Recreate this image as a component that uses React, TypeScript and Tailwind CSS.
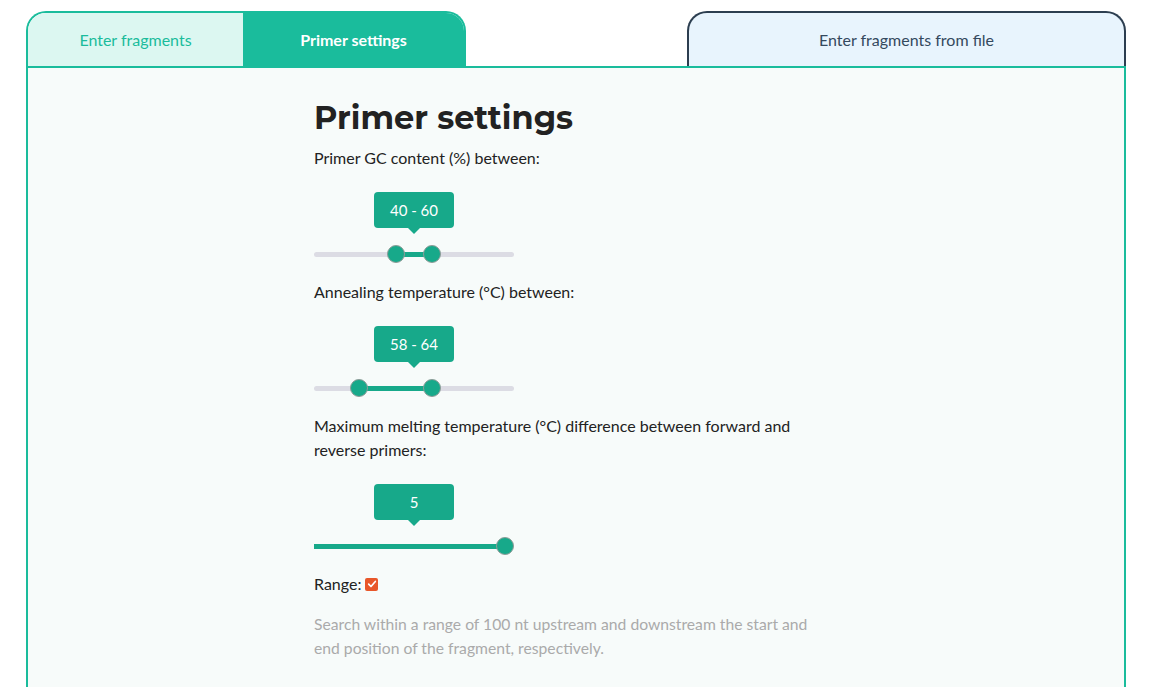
import React from "react";

interface SliderProps {
  min: number;
  max: number;
  values: number[];
  label: string;
}

const THUMB = 18;
const TRACK = 200;

function RangeSlider({ min, max, values, label }: SliderProps) {
  const pos = (v: number) => ((v - min) / (max - min)) * (TRACK - THUMB) + THUMB / 2;
  const lo = values.length > 1 ? pos(values[0]) : 0;
  const hi = pos(values[values.length - 1]);

  return (
    <div className="w-[200px] pt-[22px] pb-[17px]">
      <div className="flex flex-col items-center">
        <div className="flex h-9 w-20 items-center justify-center rounded bg-[#17a98a] text-[15px] text-white">
          {label}
        </div>
        <div className="h-0 w-0 border-x-[6px] border-t-[6px] border-x-transparent border-t-[#17a98a]" />
      </div>
      <div className="relative mt-[11px] h-[18px]">
        <div className="absolute top-[7px] left-0 h-[5px] w-full rounded-full bg-[#dcdce4]" />
        <div
          className="absolute top-[7px] h-[5px] bg-[#17a98a]"
          style={{ left: lo, width: hi - lo }}
        />
        {values.map((v, i) => (
          <div
            key={i}
            className="absolute top-0 h-[18px] w-[18px] rounded-full border border-[#8f9c98] bg-[#17a98a]"
            style={{ left: pos(v) - THUMB / 2 }}
          />
        ))}
      </div>
    </div>
  );
}

export default function App() {
  return (
    <div
      className="min-h-screen bg-white pt-[11px] text-base text-[#222]"
      style={{ fontFamily: "Lato, 'Noto Sans', sans-serif" }}
    >
      <div className="ml-[26px] flex w-[1100px] justify-between">
        <div className="flex h-[55px] w-[440px] overflow-hidden rounded-t-[20px] border-2 border-b-0 border-[#1abc9c]">
          <div className="flex w-[215px] items-center justify-center bg-[#dcf7f1] pt-px text-[#1abc9c]">
            Enter fragments
          </div>
          <div className="flex flex-1 items-center justify-center bg-[#1abc9c] pt-px font-bold text-white">
            Primer settings
          </div>
        </div>
        <div className="flex h-[55px] w-[439px] items-center justify-center rounded-t-[20px] border-2 border-b-0 border-[#2c3e50] bg-[#e8f4fd] pt-px text-[#34495e]">
          Enter fragments from file
        </div>
      </div>

      <div className="ml-[26px] w-[1100px] border-2 border-[#1abc9c] bg-[#f7fbfa] pt-[26px] pb-[60px] pl-[286px]">
        <div className="w-[520px]">
          <h1
            className="mb-1 text-[32px] leading-[48px] font-bold text-[#222]"
            style={{ fontFamily: "Montserrat, Inter, 'Noto Sans', sans-serif" }}
          >
            Primer settings
          </h1>

          <p className="leading-6">Primer GC content (%) between:</p>
          <RangeSlider min={0} max={100} values={[40, 60]} label="40 - 60" />

          <p className="leading-6">Annealing temperature (°C) between:</p>
          <RangeSlider min={55} max={70} values={[58, 64]} label="58 - 64" />

          <p className="w-[500px] leading-6">
            Maximum melting temperature (°C) difference between forward and reverse primers:
          </p>
          <RangeSlider min={0} max={5} values={[5]} label="5" />

          <label className="flex items-center gap-1 leading-6">
            Range:
            <span className="flex h-[13px] w-[13px] items-center justify-center rounded-[2px] bg-[#e8572a]">
              <svg viewBox="0 0 12 12" className="h-[10px] w-[10px]">
                <path d="M2 6.2 L4.8 9 L10 3" fill="none" stroke="white" strokeWidth="2" strokeLinecap="round" strokeLinejoin="round" />
              </svg>
            </span>
          </label>

          <p className="mt-4 text-[15.7px] leading-6 text-[#aaaaaa]">
            Search within a range of 100 nt upstream and downstream the start and end position of the fragment, respectively.
          </p>
        </div>
      </div>
    </div>
  );
}
